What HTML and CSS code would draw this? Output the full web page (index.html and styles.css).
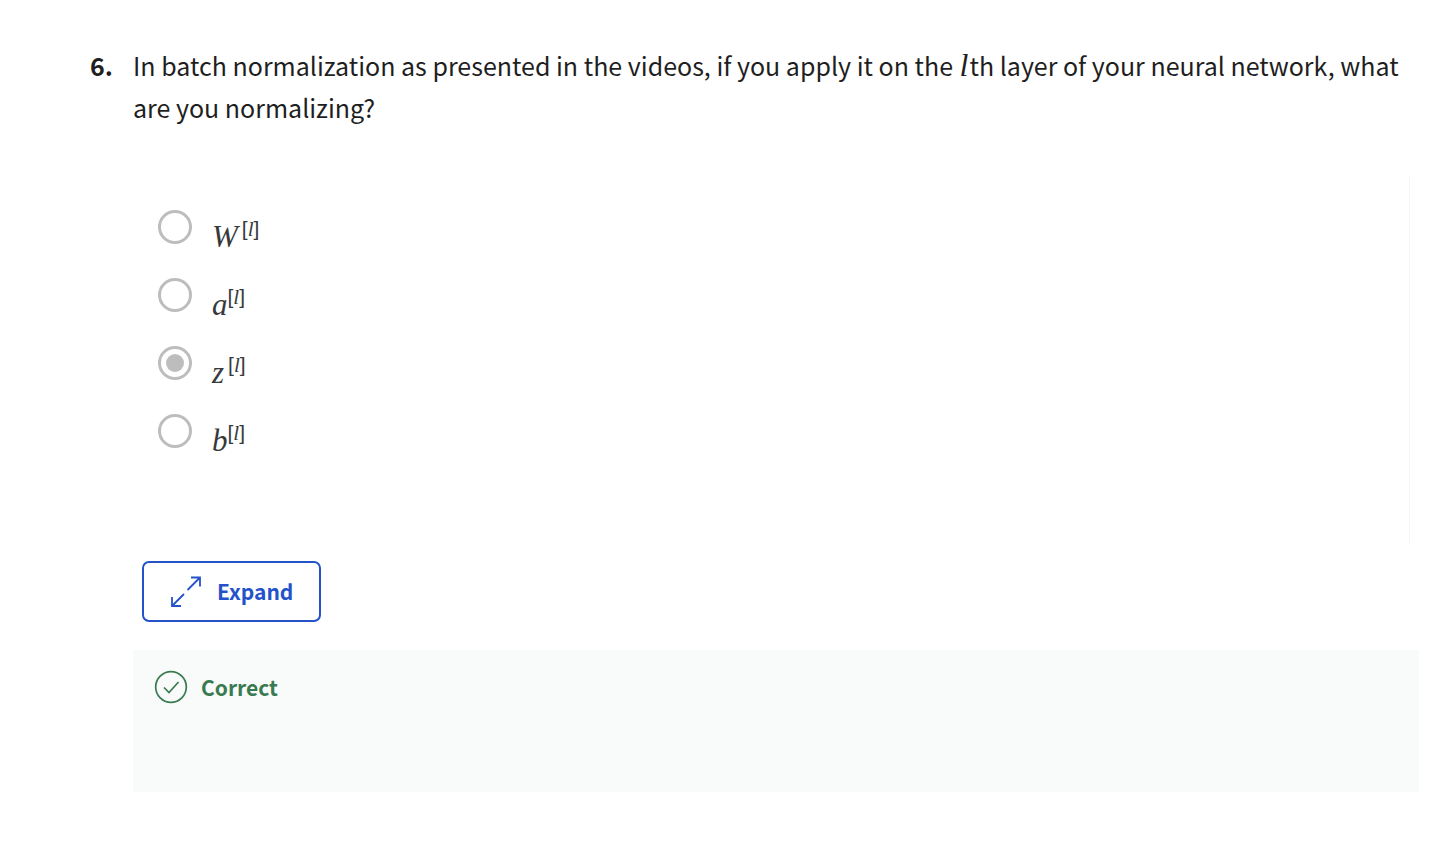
FILE: index.html
```html
<!DOCTYPE html>
<html lang="en">
<head>
<meta charset="utf-8">
<meta name="viewport" content="width=device-width, initial-scale=1">
<title>Batch normalization quiz</title>
<link rel="stylesheet" href="styles.css">
</head>
<body>
<main class="question">
  <div class="number">6.</div>
  <div class="content">
    <p class="prompt" id="prompt">In batch normalization as presented in the videos, if you apply it on the <i class="math">l</i>th layer of your neural network, what are you normalizing?</p>
    <div class="options" role="radiogroup" aria-labelledby="prompt">
      <label class="option"><input type="radio" name="answer" value="w"><span class="formula">W<sup class="spaced"><b>[</b>l<b>]</b></sup></span></label>
      <label class="option"><input type="radio" name="answer" value="a"><span class="formula">a<sup><b>[</b>l<b>]</b></sup></span></label>
      <label class="option"><input type="radio" name="answer" value="z" checked><span class="formula">z<sup class="spaced"><b>[</b>l<b>]</b></sup></span></label>
      <label class="option"><input type="radio" name="answer" value="b"><span class="formula">b<sup><b>[</b>l<b>]</b></sup></span></label>
    </div>
    <button class="expand" type="button">
      <svg width="32" height="32" viewBox="0 0 32 32" fill="none" stroke="currentColor" stroke-width="1.800" aria-hidden="true"><path d="M17.500 14 30 1.500M21 1.500h9v9M14 18 2 30M2 21v9h9"/></svg>
      Expand
    </button>
    <section class="feedback">
      <svg width="34" height="34" viewBox="0 0 34 34" fill="none" stroke="currentColor" stroke-width="1.700" aria-hidden="true"><circle cx="17" cy="17" r="15.3"/><path d="m10 17.500 5 5L24.500 12"/></svg>
      <strong>Correct</strong>
    </section>
  </div>
</main>
</body>
</html>
```
FILE: styles.css
```css
* { box-sizing: border-box; }
body {
  margin: 0;
  background: #fff;
  color: #1f1f1f;
  font-family: "Noto Sans CJK SC", "Open Sans", sans-serif;
}
.question {
  display: flex;
  padding: 44px 29px 76px 90px;
  font-size: 25px;
  line-height: 42px;
}
.number { flex: 0 0 43px; font-weight: 700; }
.content { flex: 1; min-width: 0; }
.prompt { margin: 0; padding-right: 10px; }
.math {
  font-family: "Liberation Serif", serif;
  font-size: 32px;
  line-height: 1;
  margin: 0 1px;
}
.options {
  display: flex;
  flex-direction: column;
  gap: 34px;
  margin: 49px 9px 0 0;
  padding: 33px 25px 95px;
  border-right: 1px solid #f5f5f5;
}
.option {
  display: flex;
  align-items: center;
  gap: 20px;
  height: 34px;
  color: #373a3c;
}
.option input {
  appearance: none;
  display: grid;
  place-items: center;
  width: 34px;
  height: 34px;
  margin: 0;
  border: 3px solid #bdbdbd;
  border-radius: 50%;
  background: #fff;
}
.option input:checked::before {
  content: "";
  width: 18px;
  height: 18px;
  border-radius: 50%;
  background: #bdbdbd;
}
.formula {
  padding-top: 20px;
  font: italic 31px/34px "Liberation Serif", serif;
}
.formula sup {
  font-size: 21px;
  line-height: 0;
  vertical-align: 11px;
}
.formula .spaced { margin-left: 4px; }
.formula b {
  font-family: "Liberation Sans", sans-serif;
  font-style: normal;
  font-weight: 400;
}
.expand {
  display: flex;
  align-items: center;
  gap: 15px;
  margin: 18px 0 28px 9px;
  padding: 6px 26px;
  border: 2px solid #2453c9;
  border-radius: 7px;
  background: #fff;
  color: #2453c9;
  font: 700 21px/45px "Noto Sans CJK SC", "Open Sans", sans-serif;
}
.feedback {
  display: flex;
  align-items: flex-start;
  gap: 13px;
  min-height: 142px;
  padding: 20px 21px;
  background: #f8fbfa;
  color: #3a7a50;
  font-size: 21px;
  line-height: 34px;
}
```
